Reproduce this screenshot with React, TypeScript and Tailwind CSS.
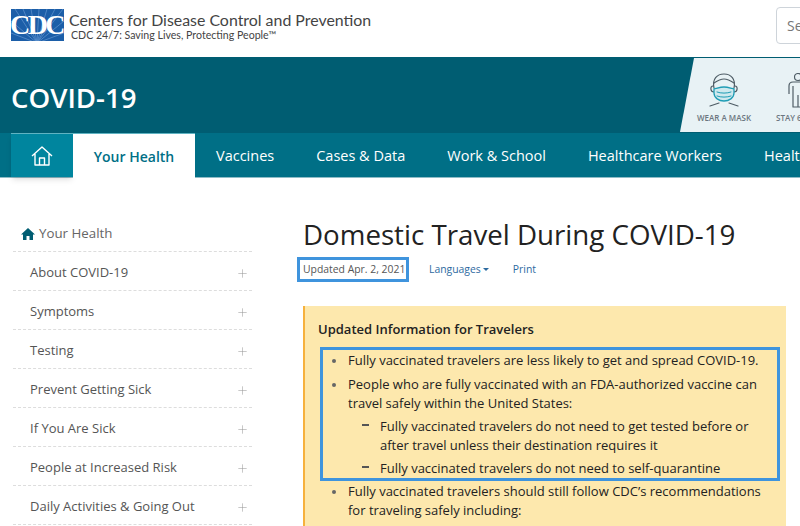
import React from "react";
import { Plus } from "lucide-react";

const sideItems = [
  "About COVID-19",
  "Symptoms",
  "Testing",
  "Prevent Getting Sick",
  "If You Are Sick",
  "People at Increased Risk",
  "Daily Activities & Going Out",
];

const navItems = ["Vaccines", "Cases & Data", "Work & School", "Healthcare Workers", "Health Depts"];

const CdcRays = () => (
  <svg width="53" height="32" viewBox="0 0 53 32" className="absolute inset-0" stroke="#6f9fd6" strokeWidth="0.6">
    <path d="M26 34L4 0M26 34L12 0M26 34L20 0M26 34L28 0M26 34L36 0M26 34L44 0M26 34L52 0M26 34L0 12M26 34L53 12M26 34L0 24M26 34L53 24" />
  </svg>
);

const MaskIcon = () => (
  <svg width="30" height="35" viewBox="0 0 30 35" fill="none" strokeLinecap="round" strokeLinejoin="round">
    <path d="M5 15C3 6 8 1 15 1s12 5 10 14" stroke="#4f5d66" strokeWidth="1.2" />
    <path d="M5 10c3-2 6-4 10-4s7 2 10 4" stroke="#4f5d66" strokeWidth="1.2" />
    <path d="M4 13c-3 0-3 6 1 6M26 13c3 0 3 6-1 6" stroke="#4f5d66" strokeWidth="1.2" />
    <path d="M5 16c4-1 7-2 10-2s6 1 10 2v4c0 5-5 8-10 8S5 25 5 20z" stroke="#1f9db5" strokeWidth="1.3" fill="#cfe9ee" />
    <path d="M8 19c4 1.500 10 1.500 14 0M8 23c4 1.500 10 1.500 14 0" stroke="#1f9db5" strokeWidth="1" />
    <path d="M1 33l9-3M29 33l-9-3" stroke="#4f5d66" strokeWidth="1.2" />
  </svg>
);

const PersonIcon = () => (
  <svg width="20" height="35" viewBox="0 0 20 35" fill="none" stroke="#4f5d66" strokeWidth="1.2" strokeLinejoin="round">
    <circle cx="10" cy="4" r="3.500" />
    <path d="M1 21V13c0-3 2-4 4-4h10c2 0 4 1 4 4v8M5 13v21h10V13M10 22v12" />
  </svg>
);

const HomeIcon = () => (
  <svg width="22" height="20" viewBox="0 0 22 20" fill="none" stroke="#fff" strokeWidth="1.400" strokeLinejoin="round">
    <path d="M1 10L11 1l10 9M4 8v11h14V8M8.500 19v-7h5v7" />
  </svg>
);

const Bullet = () => <span className="w-[4px] h-[4px] rounded-full bg-[#666] shrink-0 mt-[8px] mr-[12px]" />;
const Dash = () => <span className="w-[7px] h-[1.500px] bg-[#555] shrink-0 mt-[7px] mr-[11px]" />;

export default function App() {
  return (
    <div className="w-[800px] h-[526px] overflow-hidden bg-white font-['Open_Sans',sans-serif] text-[#333]">
      <header className="h-[57px] flex items-start pl-[11px] pt-[9px]">
        <div className="relative w-[53px] h-[32px] bg-[#1c5ea8] flex items-center justify-center overflow-hidden">
          <CdcRays />
          <span className="relative font-['Liberation_Serif',serif] font-bold text-white text-[28px] tracking-[-2.500px] leading-none pr-[2px]">CDC</span>
        </div>
        <div className="ml-[5px] font-['Lato',sans-serif]">
          <div className="text-[15.900px] leading-[20px] mt-[1px] text-[#444] whitespace-nowrap">Centers for Disease Control and Prevention</div>
          <div className="text-[10.600px] leading-[11px] text-[#444] ml-[2px] whitespace-nowrap">CDC 24/7: Saving Lives, Protecting People™</div>
        </div>
        <div className="ml-auto mt-[-2px] w-[40px] h-[37px] mr-[-16px] border border-[#ced4da] rounded-[4px] pl-[10px] text-[14px] leading-[35px] text-[#777]">
          Search
        </div>
      </header>

      <div className="h-[76px] bg-[#005d72] flex items-center relative overflow-hidden">
        <h2 className="ml-[11px] mt-[5px] text-[27.600px] font-semibold text-white leading-none">COVID-19</h2>
        <div className="absolute left-[680px] top-[1px] w-[140px] h-[74px] bg-[#e8f2f5] [clip-path:polygon(14px_0,100%_0,100%_100%,0_100%)] flex pl-[17px] pt-[15px] gap-[25px]">
          <div className="flex flex-col items-center w-[55px]">
            <MaskIcon />
            <span className="text-[8px] font-semibold text-[#6b7680] mt-[4px] whitespace-nowrap">WEAR A MASK</span>
          </div>
          <div className="flex flex-col items-start">
            <div className="ml-[12px]"><PersonIcon /></div>
            <span className="text-[8px] font-semibold text-[#6b7680] mt-[4px] whitespace-nowrap">STAY 6 FEET</span>
          </div>
        </div>
      </div>

      <nav className="h-[45px] bg-[#006f86] border-b border-[#8fbcc6] pl-[11px] flex items-stretch whitespace-nowrap text-[14.500px] text-white">
        <div className="w-[62px] shrink-0 bg-[#00859e] border-t border-[#5fb3c2] flex items-center justify-center shadow-md">
          <HomeIcon />
        </div>
        <div className="w-[122px] shrink-0 bg-white border-t border-[#5fb3c2] mb-[-1px] flex items-center justify-center font-semibold text-[14px] text-[#006f86]">
          Your Health
        </div>
        {navItems.map((n) => (
          <div key={n} className="px-[21px] pt-[2px] shrink-0 flex items-center">{n}</div>
        ))}
      </nav>

      <div className="flex mt-[-1px]">
        <aside className="w-[239px] ml-[13px] mt-[46px] shrink-0">
          <div className="h-[29px] flex items-center pl-[8px] border-b border-dashed border-[#ddd] text-[13.300px] text-[#666] pb-[7px]">
            <svg width="14" height="12" viewBox="0 0 14 12" className="mr-[4px]">
              <path d="M7 0L0 6.500h2V12h3.500V8h3v4H12V6.500h2z" fill="#005d72" />
            </svg>
            Your Health
          </div>
          {sideItems.map((s) => (
            <div key={s} className="h-[39px] pt-[4px] flex items-center justify-between pl-[17px] pr-[3px] border-b border-dashed border-[#ddd] text-[13px] text-[#555]">
              {s}
              <Plus size={13} strokeWidth={1} className="text-[#999]" />
            </div>
          ))}
        </aside>

        <main className="ml-[51px] w-[483px] shrink-0">
          <h1 className="mt-[39px] text-[27.700px] leading-[36px] text-[#222] whitespace-nowrap">Domestic Travel During COVID-19</h1>
          <div className="flex items-center mt-[5px] ml-[-6px] text-[10.400px]">
            <div className="h-[25px] w-[112px] px-[3px] border-[3px] border-[#3f94dd] flex items-center text-[#555] whitespace-nowrap">Updated Apr. 2, 2021</div>
            <span className="ml-[20px] text-[#2d6a9f] flex items-center">
              Languages
              <span className="ml-[2px] border-x-[3px] border-x-transparent border-t-[3px] border-t-[#2d6a9f]" />
            </span>
            <span className="ml-[24px] text-[#2d6a9f]">Print</span>
          </div>
          <div className="mt-[24px] w-[483px] h-[300px] bg-[#fde8ad] border-l-2 border-[#f6b13d] pl-[13px] pt-[14px] text-[13px] text-[#222]">
            <div className="font-semibold leading-[18px]">Updated Information for Travelers</div>
            <div className="mt-[9px] ml-[2px] border-[3px] border-[#3f94dd] pl-[9px] pt-[1px] h-[134px] w-[460px]">
              <div className="flex leading-[19px]"><Bullet /><span>Fully vaccinated travelers are less likely to get and spread COVID-19.</span></div>
              <div className="flex leading-[19px] mt-[5px]"><Bullet /><span>People who are fully vaccinated with an FDA-authorized vaccine can travel safely within the United States:</span></div>
              <div className="flex leading-[19px] ml-[30px] mt-[4px]"><Dash /><span>Fully vaccinated travelers do not need to get tested before or after travel unless their destination requires it</span></div>
              <div className="flex leading-[19px] ml-[30px] mt-[4px]"><Dash /><span>Fully vaccinated travelers do not need to self-quarantine</span></div>
            </div>
            <div className="flex leading-[19px] ml-[14px] mt-[1px] w-[442px]"><Bullet /><span>Fully vaccinated travelers should still follow CDC’s recommendations for traveling safely including:</span></div>
          </div>
        </main>
      </div>
    </div>
  );
}
